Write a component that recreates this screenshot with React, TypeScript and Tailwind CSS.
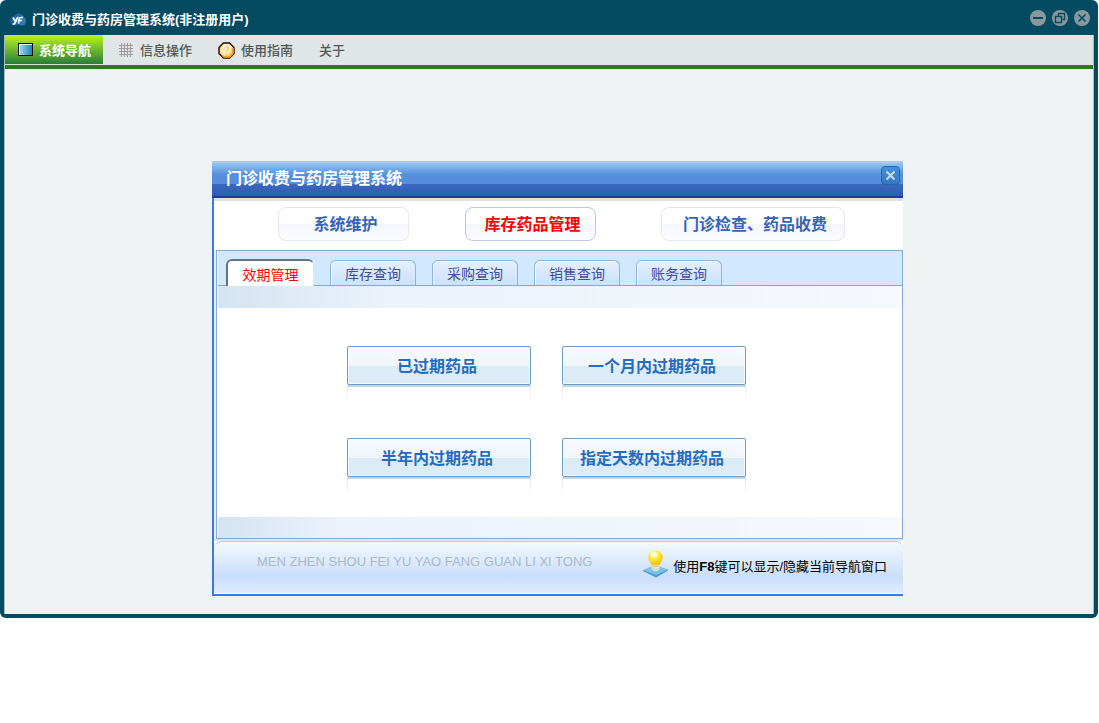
import type { ReactNode } from "react";

const mainTabs = [
  { label: "系统维护", className: "w-[131px] border-[#e3e6f6] text-[#3864b4]" },
  { label: "库存药品管理", className: "ml-14 w-[131px] border-[#b9c8ea] text-[#ff0000]" },
  { label: "门诊检查、药品收费", className: "ml-[65px] w-[184px] border-[#e3e6f6] text-[#3864b4]" },
];

const subTabs = ["效期管理", "库存查询", "采购查询", "销售查询", "账务查询"];

const actions = ["已过期药品", "一个月内过期药品", "半年内过期药品", "指定天数内过期药品"];

function LogoIcon() {
  return (
    <svg width="16" height="14" viewBox="0 0 16 14" aria-hidden="true">
      <ellipse cx="5" cy="8" rx="5" ry="4.500" fill="#1c5f9b" />
      <circle cx="9" cy="6" r="5.500" fill="#2468a4" />
      <ellipse cx="12" cy="8" rx="4" ry="4.500" fill="#2f7ab5" />
      <path d="M3 4.500 5.500 8.500M8 4 4.500 11H2.500M13 4.500H10.500Q9 4.500 8.500 10.500M8.500 7.500H12" stroke="#fff" strokeWidth="1.700" fill="none" />
    </svg>
  );
}

function ScreenIcon() {
  return (
    <svg width="15" height="13" viewBox="0 0 15 13" aria-hidden="true">
      <defs>
        <linearGradient id="screen" x1="0" y1="0" x2="1" y2="0">
          <stop offset="0" stopColor="#9bd6ee" />
          <stop offset="1" stopColor="#1c83b9" />
        </linearGradient>
      </defs>
      <rect width="15" height="13" fill="#050b10" />
      <rect x="1" y="1" width="13" height="11" fill="#e4f5fb" />
      <rect x="2" y="2" width="12" height="10" fill="url(#screen)" />
    </svg>
  );
}

function GridIcon() {
  return (
    <svg width="14" height="14" viewBox="0 0 14 14" shapeRendering="crispEdges" aria-hidden="true">
      <path d="M2.500 0V14M5.500 0V14M8.500 0V14M11.500 0V14M0 2.500H14M0 5.500H14M0 8.500H14M0 11.500H14" stroke="#a09a9c" />
    </svg>
  );
}

function HelpIcon() {
  return (
    <svg width="17" height="17" viewBox="0 0 17 17" aria-hidden="true">
      <path d="M5.500 1H11.500L16 5.500V11.500L11.500 16H5.500L1 11.500V5.500Z" fill="#ffc94a" stroke="#2d0a02" strokeWidth="1.400" />
      <path d="M6 2H11L14 4.500 12 11 6 14 2.500 11V6Z" fill="#fff0bd" />
      <path d="M4 13.500 6 15H11.500L15 11.500V6" stroke="#f29a16" strokeWidth="1.500" fill="none" />
      <path d="M6.500 6.500Q6.500 4.500 8.500 4.500T10.500 6.500Q10.500 8 8.500 9V10.500M8.500 11.500V13" stroke="#e5cf9c" strokeWidth="1.600" fill="none" />
      <path d="M5.500 6Q5.500 3.500 8 3.500" stroke="#fff" strokeWidth="1.300" fill="none" />
    </svg>
  );
}

function BulbIcon() {
  return (
    <svg width="27" height="28" viewBox="0 0 27 28" className="shrink-0" aria-hidden="true">
      <defs>
        <radialGradient id="bulb" cx="0.4" cy="0.25" r="0.8">
          <stop offset="0" stopColor="#fffbc2" />
          <stop offset="0.450" stopColor="#ffe72b" />
          <stop offset="1" stopColor="#f2b900" />
        </radialGradient>
      </defs>
      <path d="M1 20 13 15 26 19.500 14 26Z" fill="#79c0ea" />
      <path d="M1 20 14 25 26 19.500V20.500L14 27.500 1 21Z" fill="#4a98cd" />
      <path d="M9.500 13H17.500V19.500Q13.500 23 9.500 19.500Z" fill="#ece9cf" />
      <path d="M9.500 16Q13.500 17.500 17.500 16M9.500 18.500Q13.500 20.500 17.500 18.500" stroke="#c8c9b8" fill="none" />
      <path d="M13.500 0.500C17.800 0.500 20.800 3.500 20.800 7.500C20.800 10.500 18.500 12 17.800 14.500Q13.500 16.500 9.300 14.500C8.500 12 6.200 10.500 6.200 7.500C6.200 3.500 9.200 0.500 13.500 0.500Z" fill="url(#bulb)" />
      <ellipse cx="12" cy="4.500" rx="3.500" ry="2.500" fill="#fffde0" opacity="0.8" />
    </svg>
  );
}

function WindowButton({ label, children }: { label: string; children: ReactNode }) {
  return (
    <button type="button" aria-label={label} className="size-4 rounded-full bg-[#87999f]">
      <svg width="16" height="16" viewBox="0 0 16 16" fill="none" stroke="#044a61" aria-hidden="true">
        {children}
      </svg>
    </button>
  );
}

function TitleBar() {
  return (
    <header className="flex h-[35px] items-center justify-between px-1.5">
      <div className="flex items-center gap-1.5 pt-1">
        <LogoIcon />
        <h1 className="text-[13px] leading-4 font-bold text-white">门诊收费与药房管理系统(非注册用户)</h1>
      </div>
      <div className="-mr-1.5 flex gap-1.5 pr-1">
        <WindowButton label="最小化">
          <path d="M3 8H13" strokeWidth="2" />
        </WindowButton>
        <WindowButton label="还原">
          <path d="M6.500 6V3.500H12.500V9.500H10.500M3.500 6.500H9.500V12.500H3.500Z" strokeWidth="1.400" />
        </WindowButton>
        <WindowButton label="关闭">
          <path d="M4.500 4.500 11.500 11.500M11.500 4.500 4.500 11.500" strokeWidth="1.600" />
        </WindowButton>
      </div>
    </header>
  );
}

function MenuBar() {
  return (
    <nav className="flex h-[30px] bg-[#e0e5e5] text-[13px] leading-4 font-medium text-[#52585a]">
      <button type="button" className="flex items-center gap-1.5 border-b border-[#d5e6cf] bg-linear-to-b from-[#bdf315] via-[#6dba2c] to-[#287c35] pr-3 pl-[13px] font-bold text-white">
        <ScreenIcon />
        <span className="pt-0.5">系统导航</span>
      </button>
      <button type="button" className="flex items-center gap-[7px] pr-[13px] pl-4">
        <GridIcon />
        <span className="pt-0.5">信息操作</span>
      </button>
      <button type="button" className="flex items-center gap-1.5 px-[13px]">
        <HelpIcon />
        <span className="pt-0.5">使用指南</span>
      </button>
      <button type="button" className="flex items-center px-[13px]">
        <span className="pt-0.5">关于</span>
      </button>
    </nav>
  );
}

function ActionButton({ label }: { label: string }) {
  return (
    <div>
      <button
        type="button"
        className="flex h-[39px] w-full items-center justify-center rounded-xs border border-[#6b9ac2] bg-linear-to-b from-[#f6f9fd] from-0% via-[#f0f6fb] via-50% to-[#dcecf6] to-52% pr-1 text-base leading-5 font-bold text-[#266bc0] shadow-[inset_0_0_0_1px_#ffffffb0]"
      >
        <span className="pt-0.5">{label}</span>
      </button>
      <div className="h-[17px] border-x border-t-2 border-x-[#dce7f1] border-t-[#c3d6e5] mask-b-from-10%" />
    </div>
  );
}

function NavDialog() {
  return (
    <section aria-label="导航窗口" className="border-b-2 border-l-2 border-[#3f78dc] bg-white">
      <header className="-ml-0.5 h-[37px] border-t-2 border-b-2 border-t-[#b7c7e3] border-b-[#1b3d9b] bg-linear-to-b from-[#93c8f2] from-0% via-[#568edb] via-35% to-[#568edb] to-60%">
        <div className="flex h-full items-start justify-between bg-linear-to-b from-transparent from-64% via-[#3a68bf] via-64% to-[#2f5bb0] pr-[3px] pl-3.5">
          <h2 className="pt-1.5 text-base leading-5 font-bold text-white">门诊收费与药房管理系统</h2>
          <button type="button" aria-label="关闭导航窗口" className="mt-[3px] flex size-[19px] items-center justify-center rounded-sm border border-[#2864aa] bg-linear-to-b from-[#4291dc] to-[#3478c6]">
            <svg width="11" height="11" viewBox="0 0 11 11" stroke="#c3dcf4" strokeWidth="2" aria-hidden="true">
              <path d="M1.500 1.500 9.500 9.500M9.500 1.500 1.500 9.500" />
            </svg>
          </button>
        </div>
      </header>

      <div className="flex border-t-3 border-[#e4deeb] pt-1.5 pb-[9px] pl-16">
        {mainTabs.map((tab) => (
          <button
            key={tab.label}
            type="button"
            className={`h-[34px] rounded-lg border bg-linear-to-b from-white from-50% via-[#f4f6fd] via-50% to-[#fdfdff] pt-0.5 pl-1 text-base leading-5 font-bold ${tab.className}`}
          >
            {tab.label}
          </button>
        ))}
      </div>

      <div className="border-l-2 border-[#e3effc]">
        <div className="border border-[#84a9d3] pl-px">
          <div role="tablist" className="flex h-[35px] items-end border-b border-[#7fa9d3] bg-[#d2e8ff] pl-2">
            {subTabs.map((label, i) => (
              <button
                key={label}
                type="button"
                role="tab"
                aria-selected={i === 0}
                className={
                  i === 0
                    ? "-mb-px h-[27px] w-[88px] rounded-t-md border-t-2 border-r border-l-2 border-[#64727e] border-r-[#dce6ef] bg-white pt-0.5 text-sm text-[#ff0000]"
                    : "ml-4 h-[25px] w-[86px] rounded-t-md border border-b-0 border-[#8fb4dc] bg-linear-to-b from-[#e4f0fd] to-[#cce1fb] pt-0.5 text-sm text-[#464a9c] shadow-[inset_1px_1px_0_#f4f9ff]"
                }
              >
                {label}
              </button>
            ))}
          </div>
          <div className="h-[22px] bg-linear-to-r from-[#d4e4f2] via-[#ecf2fb] via-25% to-[#f5f8fc]" />
          <div className="grid grid-cols-[184px_184px] gap-x-[31px] gap-y-9 pt-[38px] pb-[23px] pl-[129px]">
            {actions.map((label) => (
              <ActionButton key={label} label={label} />
            ))}
          </div>
          <div className="h-[21px] bg-linear-to-r from-[#d4e4f2] via-[#ecf2fb] via-18% to-[#f5f8fc]" />
        </div>
      </div>

      <footer className="border-t-2 border-b border-t-[#d8e4f8] border-b-white">
        <div className="flex h-[52px] items-start justify-between rounded-t-lg border-t border-[#b5cef0] bg-linear-to-b from-[#f4f9ff] from-0% via-[#c9defa] via-68% to-[#dfebfc] pr-4 pl-[43px]">
          <p className="pt-2.5 font-['Liberation_Sans',sans-serif] text-[13px] leading-5 text-[#a9b9cb]">
            MEN ZHEN SHOU FEI YU YAO FANG GUAN LI XI TONG
          </p>
          <p className="flex items-start gap-1 pt-2 text-[13px] leading-5 text-black">
            <BulbIcon />
            <span className="pt-[7px]">
              使用<b>F8</b>键可以显示/隐藏当前导航窗口
            </span>
          </p>
        </div>
      </footer>
    </section>
  );
}

export default function App() {
  return (
    <div className="bg-white font-['Liberation_Sans','Noto_Sans_CJK_SC',sans-serif]">
      <div className="mr-px rounded-md bg-[#044a61] px-1 pb-1">
        <TitleBar />
        <div className="border-x border-[#a5bac0]">
          <MenuBar />
          <main className="border-t-4 border-[#2c7a1e] bg-[#eef2f2] pt-[92px] pr-[190px] pb-[18px] pl-[207px]">
            <NavDialog />
          </main>
        </div>
      </div>
    </div>
  );
}
